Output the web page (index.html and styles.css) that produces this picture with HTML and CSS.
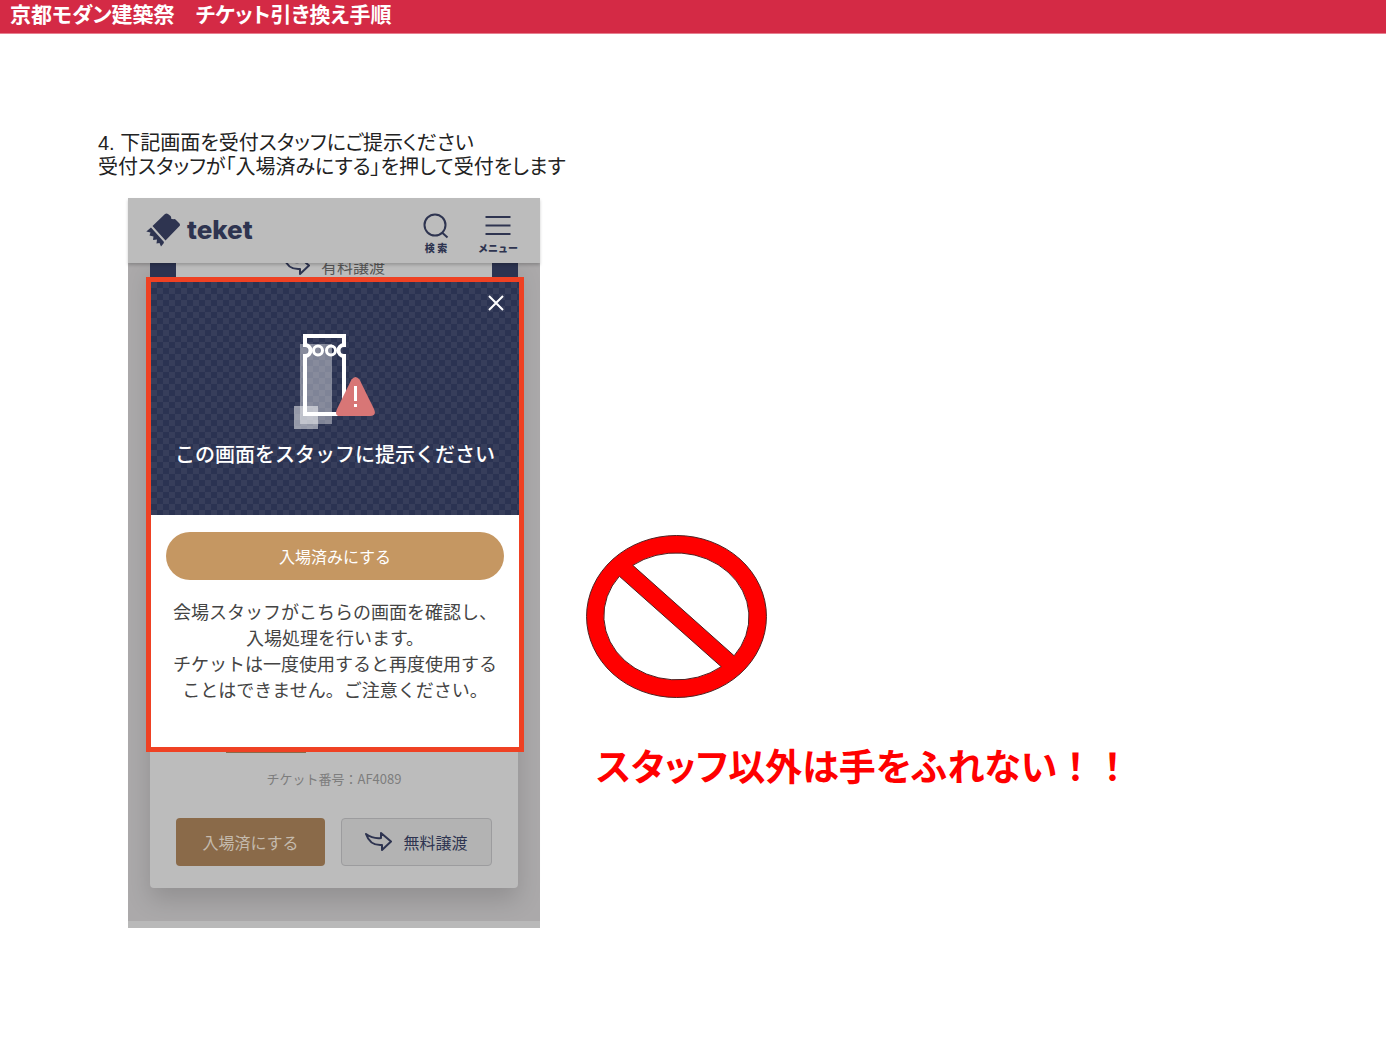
FILE: index.html
```html
<!DOCTYPE html>
<html lang="ja">
<head>
    <meta charset="UTF-8">
    <meta name="viewport" content="width=device-width, initial-scale=1.0">
    <title>京都モダン建築祭 チケット引き換え手順</title>
    <link rel="stylesheet" href="styles.css">
</head>
<body>
    <header class="page-header">
        <h1>京都モダン建築祭　チケット引き換え手順</h1>
    </header>
    <main class="step">
        <p class="step-text">4. 下記画面を受付スタッフにご提示ください<br>受付スタッフが「入場済みにする」を押して受付をします</p>
        <div class="step-body">
            <div class="phone">
                <div class="app-bar">
                    <a class="logo" href="#">
                        <svg width="34" height="34" viewBox="0 0 34 34" aria-hidden="true">
                            <path d="M6.500 13L19 1q1.500-1 3 0l2.500 2q1 1 .5 2.500 1.500 1 3.500.5l1 .5 4 4q1 1.500 0 2.500L19.500 27.500z"/>
                            <path d="M5 14.500L18 29l-.5 1.500-2.500 3-1.500-3.500-3 .5.500-4-4 .5.500-3.500L3.500 22.500l1-3L.3 18.500z"/>
                        </svg>
                        <span>teket</span>
                    </a>
                    <nav class="app-nav">
                        <button type="button" class="nav-button">
                            <svg width="28" height="28" viewBox="0 0 28 28" aria-hidden="true">
                                <circle cx="13" cy="12" r="10.500"/>
                                <path d="M20 19.500l5.500 5"/>
                            </svg>
                            <span>検 索</span>
                        </button>
                        <button type="button" class="nav-button">
                            <svg width="28" height="28" viewBox="0 0 28 28" aria-hidden="true">
                                <path d="M1.500 4h25M1.500 12.500h25M1.500 21h25"/>
                            </svg>
                            <span>メニュー</span>
                        </button>
                    </nav>
                </div>
                <div class="app-content">
                    <div class="ticket">
                        <div class="ticket-top">
                            <button type="button" class="transfer-link">
                                <svg class="arrow" width="28" height="20" viewBox="0 0 28 20" aria-hidden="true">
                                    <path d="M1 2q7 5 15 4V1l10 8.500L17 18v-5Q5 14 1 2z"/>
                                </svg>
                                有料譲渡
                            </button>
                        </div>
                        <div class="ticket-bottom">
                            <div class="ticket-mark"></div>
                            <p class="ticket-number">チケット番号：AF4089</p>
                            <div class="ticket-actions">
                                <button type="button" class="btn btn-used">入場済にする</button>
                                <button type="button" class="btn btn-transfer">
                                    <svg class="arrow" width="28" height="20" viewBox="0 0 28 20" aria-hidden="true">
                                        <path d="M1 2q7 5 15 4V1l10 8.500L17 18v-5Q5 14 1 2z"/>
                                    </svg>
                                    無料譲渡
                                </button>
                            </div>
                        </div>
                    </div>
                </div>
                <div class="app-footer"></div>

                <section class="modal" role="dialog" aria-labelledby="modal-title">
                    <div class="modal-head">
                        <button type="button" class="modal-close" aria-label="閉じる">
                            <svg width="16" height="16" viewBox="0 0 16 16" aria-hidden="true">
                                <path d="M1 1l14 14M15 1L1 15"/>
                            </svg>
                        </button>
                        <svg class="modal-icon" width="82" height="96" viewBox="0 0 82 96" aria-hidden="true">
                            <path d="M6 10h32v80H6z" fill="#fff" fill-opacity=".4"/>
                            <path d="M0 72h24v23H0z" fill="#fff" fill-opacity=".5"/>
                            <path d="M11 2h39v9a5.500 5.500 0 0 0 0 11v58H11V22a5.500 5.500 0 0 0 0-11z" fill="none" stroke="#fff" stroke-width="4"/>
                            <circle cx="24" cy="16.500" r="4.500" fill="none" stroke="#fff" stroke-width="3"/>
                            <circle cx="37" cy="16.500" r="4.500" fill="none" stroke="#fff" stroke-width="3"/>
                            <path d="M57.500 45.500q4-5 8 0L80 75q3 7-4 7H46q-6 0-3-7z" fill="#d87676"/>
                            <path d="M61.500 52v15M61.500 70v3" stroke="#fff" stroke-width="3"/>
                        </svg>
                        <h2 id="modal-title">この画面をスタッフに提示ください</h2>
                    </div>
                    <div class="modal-body">
                        <button type="button" class="btn-confirm">入場済みにする</button>
                        <p>会場スタッフがこちらの画面を確認し、<br>入場処理を行います。<br>チケットは一度使用すると再度使用する<br>ことはできません。ご注意ください。</p>
                    </div>
                </section>
            </div>
            <div class="warning">
                <svg width="181" height="163" viewBox="0 0 182 164" role="img" aria-label="禁止">
                    <path fill="red" stroke="#4d2020" fill-rule="evenodd" d="M.5 82a90.500 81.500 0 0 1 181 0a90.500 81.500 0 0 1-181 0z
                        M47 30.500A73.500 64.500 0 0 1 149 121.500z
                        M33.500 41.500A73.500 64.500 0 0 0 136 132.500z"/>
                </svg>
                <p>スタッフ以外は手をふれない<span class="marks">！！</span></p>
            </div>
        </div>
    </main>
</body>
</html>
```

FILE: styles.css
```css
* {
    box-sizing: border-box;
}
body {
    margin: 0;
    background: #fff;
    color: #222;
    font-family: "Liberation Sans", "Noto Sans CJK JP", sans-serif;
}
h1, h2, p {
    margin: 0;
}
button {
    font-family: inherit;
    padding: 0;
    border: 0;
    background: none;
    cursor: pointer;
}
.page-header {
    background: #d42a45;
    border-bottom: 1px solid #e67f8f;
    padding: 0 10px 3px;
}
.page-header h1 {
    color: #fff;
    font-size: 21px;
    line-height: 30px;
    font-feature-settings: "palt";
}
.step {
    padding: 97px 98px 0;
}
.step-text {
    font-size: 20px;
    line-height: 24px;
    font-feature-settings: "palt";
}
.step-body {
    display: flex;
    align-items: flex-start;
    gap: 46px;
    padding: 19px 0 0 30px;
}

/* phone screen */
.phone {
    position: relative;
    flex: 0 0 auto;
    width: 412px;
    background: #aba9aa;
    color: #2e3450;
    font-family: "Noto Sans CJK JP", sans-serif;
}
.app-bar {
    position: relative;
    display: flex;
    justify-content: space-between;
    align-items: center;
    height: 65px;
    padding: 0 22px 0 18px;
    background: #bcbcbc;
    box-shadow: 0 2px 3px rgba(0, 0, 0, 0.2);
}
.logo {
    display: flex;
    align-items: center;
    gap: 7px;
    padding-bottom: 2px;
    color: #2e3450;
    font-family: Inter, sans-serif;
    font-size: 26px;
    font-weight: 800;
    line-height: 32px;
    text-decoration: none;
}
.logo svg {
    fill: #2e3450;
}
.app-nav {
    display: flex;
    gap: 22px;
    padding-top: 6px;
}
.nav-button {
    display: flex;
    flex-direction: column;
    align-items: center;
    width: 40px;
    color: #2e3450;
    font-size: 10px;
    font-weight: 900;
    line-height: 14px;
}
.nav-button svg {
    fill: none;
    stroke: #2e3450;
    stroke-width: 2;
}
.app-content {
    padding: 0 22px 33px;
}
.ticket {
    background: #bcbcbc;
    border-radius: 0 0 4px 4px;
    box-shadow: 0 12px 24px rgba(0, 0, 0, 0.15);
}
.ticket-top {
    height: 40px;
    border: solid #2c3350;
    border-width: 0 26px;
}
.transfer-link {
    display: flex;
    justify-content: center;
    align-items: center;
    gap: 10px;
    width: 100%;
    height: 6px;
    color: #555;
    font-size: 16px;
}
.arrow {
    fill: none;
    stroke: #2e3450;
    stroke-width: 2;
    stroke-linejoin: round;
}
.ticket-bottom {
    padding: 443px 26px 22px;
}
.ticket-mark {
    width: 80px;
    height: 7px;
    margin-left: 50px;
    background: #8a6a49;
}
.ticket-number {
    padding: 16px 0 29px;
    color: #7d7d7d;
    font-size: 13px;
    line-height: 20px;
    text-align: center;
}
.ticket-actions {
    display: flex;
    gap: 16px;
}
.btn {
    flex: 1 0 0;
    display: flex;
    justify-content: center;
    align-items: center;
    gap: 10px;
    height: 48px;
    border-radius: 4px;
    font-size: 16px;
}
.btn-used {
    background: #8a6a49;
    color: #c4baad;
}
.btn-transfer {
    border: 1px solid #9c9c9e;
    background: #b3b3b3;
    color: #2e3450;
}
.app-footer {
    height: 7px;
    background: #b9b9b9;
}

/* dialog over the screen */
.modal {
    position: absolute;
    top: 79px;
    left: 18px;
    right: 16px;
    border: 5px solid #ef4123;
    background: #fff;
}
.modal-head {
    position: relative;
    display: flex;
    flex-direction: column;
    align-items: center;
    padding: 52px 0 46px;
    background: repeating-conic-gradient(#2b3352 0 25%, #373e5b 0 50%) 0 0 / 12px 12px;
    color: #fff;
}
.modal-close {
    position: absolute;
    top: 13px;
    right: 15px;
    line-height: 0;
}
.modal-close svg {
    fill: none;
    stroke: #fff;
    stroke-width: 2;
}
.modal-head h2 {
    padding-top: 9px;
    font-size: 20px;
    font-weight: 500;
    line-height: 30px;
}
.modal-body {
    padding: 17px 15px 45px;
    text-align: center;
}
.btn-confirm {
    width: 100%;
    height: 48px;
    border-radius: 24px;
    background: #c59762;
    color: #fff;
    font-size: 16px;
}
.modal-body p {
    margin: 18px -8px 0;
    color: #444;
    font-size: 18px;
    line-height: 26px;
}

/* no touching notice */
.warning {
    padding-top: 337px;
}
.warning svg {
    display: block;
}
.warning p {
    padding: 41px 0 0 10px;
    color: #f00;
    font-size: 37px;
    font-weight: 700;
    line-height: 60px;
    font-feature-settings: "palt";
}
.warning .marks {
    font-feature-settings: normal;
}
```
